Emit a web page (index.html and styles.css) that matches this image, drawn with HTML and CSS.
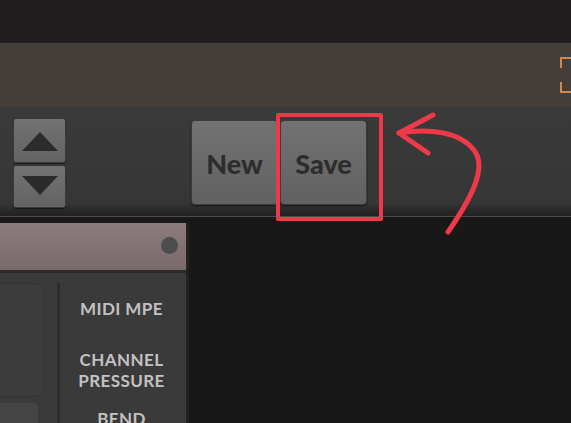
FILE: index.html
```html
<!DOCTYPE html>
<html lang="en">
<head>
    <meta charset="UTF-8">
    <meta name="viewport" content="width=device-width, initial-scale=1.0">
    <title>Preset Toolbar</title>
    <link rel="stylesheet" href="styles.css">
</head>
<body>
    <div class="titlebar"></div>

    <div class="infobar">
        <div class="bracket">
            <span class="bracket-top"></span>
            <span class="bracket-bottom"></span>
        </div>
    </div>

    <div class="toolbar">
        <div class="stepper">
            <button class="step-button step-up"><span class="tri-up"></span></button>
            <button class="step-button step-down"><span class="tri-down"></span></button>
        </div>
        <div class="preset-buttons">
            <button class="preset-button">New</button>
            <button class="preset-button">Save</button>
        </div>
    </div>

    <div class="main">
        <div class="panel">
            <div class="panel-header">
                <span class="panel-dot"></span>
            </div>
            <div class="panel-body">
                <div class="panel-left">
                    <div class="left-box"></div>
                    <div class="left-box-small"></div>
                </div>
                <div class="divider"></div>
                <div class="labels">
                    <div class="label label-mpe">MIDI MPE</div>
                    <div class="label label-pressure">CHANNEL<br>PRESSURE</div>
                    <div class="label label-bend">BEND</div>
                </div>
            </div>
        </div>
    </div>

    <!-- annotation drawn over the screenshot -->
    <div class="highlight"></div>
    <svg class="arrow" width="571" height="423" viewBox="0 0 571 423">
        <path d="M448 232 C470 200 488 168 474 150 C460 132 430 128 399 133" fill="none" stroke="#ee3a48" stroke-width="5" stroke-linecap="round"/>
        <path d="M433 115 L399 133 L428 153" fill="none" stroke="#ee3a48" stroke-width="5" stroke-linecap="round" stroke-linejoin="round"/>
    </svg>
</body>
</html>
```

FILE: styles.css
```css
* {
    margin: 0;
    padding: 0;
    box-sizing: border-box;
}

body {
    width: 571px;
    height: 423px;
    overflow: hidden;
    background-color: #181818;
    font-family: Lato, "Open Sans", sans-serif;
    position: relative;
}

.titlebar {
    height: 43px;
    background: #1f1d1d;
}

.infobar {
    height: 64px;
    background: #433f38;
    display: flex;
    justify-content: flex-end;
    align-items: flex-start;
    padding-top: 14px;
}

.bracket {
    width: 11px;
    height: 36px;
    display: flex;
    flex-direction: column;
    justify-content: space-between;
}

.bracket span {
    display: block;
    height: 11px;
    border-left: 2px solid #d8874a;
}

.bracket-top {
    border-top: 2px solid #d8874a;
}

.bracket-bottom {
    border-bottom: 2px solid #d8874a;
}

.toolbar {
    height: 110px;
    background: linear-gradient(#3a3a3a 0%, #363636 88%, #252525 97%, #222 100%);
    border-bottom: 1px solid #4c4c4c;
    display: flex;
    align-items: flex-start;
    padding: 11px 0 0 13px;
}

.stepper {
    display: flex;
    flex-direction: column;
    gap: 2px;
    width: 53px;
}

.step-button {
    width: 53px;
    border: 1px solid #3a3a3a;
    border-radius: 3px;
    background: linear-gradient(#727272, #636363);
    box-shadow: 0 1px 1px rgba(0, 0, 0, 0.5);
    display: flex;
    justify-content: center;
    align-items: center;
}

.step-up {
    height: 45px;
    padding-top: 2px;
}

.step-down {
    height: 43px;
    padding-bottom: 2px;
}

.tri-up {
    width: 0;
    height: 0;
    border-left: 18px solid transparent;
    border-right: 18px solid transparent;
    border-bottom: 19px solid #2b2b2b;
}

.tri-down {
    width: 0;
    height: 0;
    border-left: 18px solid transparent;
    border-right: 18px solid transparent;
    border-top: 19px solid #2b2b2b;
}

.preset-buttons {
    display: flex;
    gap: 2px;
    margin: 2px 0 0 125px;
}

.preset-button {
    width: 87px;
    height: 85px;
    border: 1px solid #3c3c3c;
    border-radius: 4px;
    background: linear-gradient(#727272, #616161);
    box-shadow: 0 1px 2px rgba(0, 0, 0, 0.6);
    font-family: Lato, sans-serif;
    font-weight: 900;
    font-size: 27px;
    color: #2d2d2d;
    padding-top: 2px;
}

.main {
    padding-top: 6px;
    display: flex;
}

.panel {
    width: 189px;
    height: 200px;
    background: #3a3a3a;
    border-right: 3px solid #222;
}

.panel-header {
    height: 50px;
    background: linear-gradient(#8c7c7e, #7a696b);
    border-bottom: 3px solid #2a2a2a;
    display: flex;
    justify-content: flex-end;
    align-items: center;
    padding: 0 8px 2px 0;
}

.panel-dot {
    width: 17px;
    height: 17px;
    border-radius: 50%;
    background: #4d4d4e;
}

.panel-body {
    display: flex;
    padding-top: 10px;
}

.panel-left {
    width: 57px;
    display: flex;
    flex-direction: column;
    gap: 6px;
}

.left-box {
    width: 45px;
    height: 114px;
    border: 1px solid #333;
    border-left: none;
    border-radius: 0 8px 8px 0;
    background: #3b3b3b;
}

.left-box-small {
    width: 38px;
    height: 30px;
    border-radius: 0 4px 0 0;
    background: #444;
}

.divider {
    width: 3px;
    height: 160px;
    background: #2c2c2c;
}

.labels {
    width: 123px;
    display: flex;
    flex-direction: column;
    align-items: center;
    padding-top: 15px;
}

.label {
    font-family: Lato, sans-serif;
    font-weight: 700;
    font-size: 17px;
    line-height: 21px;
    letter-spacing: 0.4px;
    color: #c2c2c2;
    text-align: center;
}

.label-pressure {
    margin-top: 30px;
}

.label-bend {
    margin-top: 17px;
}

.highlight {
    position: absolute;
    left: 276px;
    top: 113px;
    width: 107px;
    height: 108px;
    border: 4px solid #ee3a48;
    border-radius: 2px;
}

.arrow {
    position: absolute;
    left: 0;
    top: 0;
}
```
